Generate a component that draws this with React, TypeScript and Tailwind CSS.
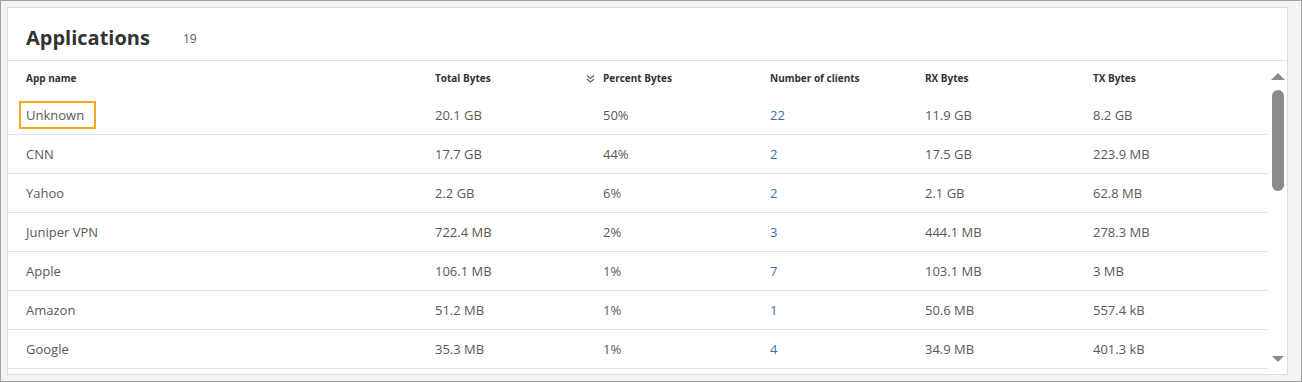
import React from "react";

const rows = [
  ["Unknown", "20.1 GB", "50%", "22", "11.9 GB", "8.2 GB"],
  ["CNN", "17.7 GB", "44%", "2", "17.5 GB", "223.9 MB"],
  ["Yahoo", "2.2 GB", "6%", "2", "2.1 GB", "62.8 MB"],
  ["Juniper VPN", "722.4 MB", "2%", "3", "444.1 MB", "278.3 MB"],
  ["Apple", "106.1 MB", "1%", "7", "103.1 MB", "3 MB"],
  ["Amazon", "51.2 MB", "1%", "1", "50.6 MB", "557.4 kB"],
  ["Google", "35.3 MB", "1%", "4", "34.9 MB", "401.3 kB"],
];

const cols = "grid grid-cols-[409px_168px_167px_155px_168px_1fr]";

export default function App() {
  return (
    <div
      className="w-[1302px] h-[382px] border border-[#a3a3a3] bg-[#f3f3f3] pt-[6px] pl-[6px] pr-[13px] pb-[6px] box-border"
      style={{ fontFamily: '"Open Sans", "Noto Sans", sans-serif' }}
    >
      <div className="h-full bg-white border border-[#dcdcdc] flex flex-col">
        <div className="h-[53px] shrink-0 border-b border-[#e0e0e0] flex items-center pl-[18px] pt-[8px]">
          <span className="text-[20px] font-bold text-[#333] leading-none">Applications</span>
          <span className="ml-[33px] text-[12px] text-[#555] leading-none mt-[2px]">19</span>
        </div>
        <div className="flex flex-1 min-h-0">
          <div className="flex-1 flex flex-col">
            <div className={`${cols} h-[35px] items-center pl-[18px] text-[10px] font-bold text-[#333]`}>
              <div>App name</div>
              <div>Total Bytes</div>
              <div className="relative">
                <svg
                  className="absolute left-[-17px] top-1/2 -translate-y-1/2"
                  width="9"
                  height="9"
                  viewBox="0 0 9 9"
                  fill="none"
                  stroke="#5a6270"
                  strokeWidth="1.2"
                >
                  <path d="M1 1 L4.5 4 L8 1" />
                  <path d="M1 4.5 L4.5 7.5 L8 4.5" />
                </svg>
                Percent Bytes
              </div>
              <div>Number of clients</div>
              <div>RX Bytes</div>
              <div>TX Bytes</div>
            </div>
            {rows.map((r, i) => (
              <div
                key={i}
                className={`${cols} h-[39px] items-center pl-[18px] pt-[1px] border-b border-[#e3e3e3] text-[13px] text-[#595959]`}
              >
                <div className="relative">
                  {i === 0 && (
                    <span className="absolute left-[-7px] top-1/2 -translate-y-1/2 mt-[-1px] w-[77px] h-[28px] border-2 border-[#f5a81c]" />
                  )}
                  {r[0]}
                </div>
                <div>{r[1]}</div>
                <div>{r[2]}</div>
                <div className="text-[#3b6db3]">{r[3]}</div>
                <div>{r[4]}</div>
                <div>{r[5]}</div>
              </div>
            ))}
          </div>
          <div className="w-[19px] shrink-0 flex flex-col items-center pt-[12px]">
            <svg width="14" height="7" viewBox="0 0 14 7">
              <path d="M0 7 L7 0 L14 7 Z" fill="#8a8a8a" />
            </svg>
            <div className="mt-[10px] w-[12px] h-[101px] rounded-full bg-[#8a8a8a]" />
            <div className="flex-1" />
            <svg width="12" height="6" viewBox="0 0 12 6" className="mb-[12px]">
              <path d="M0 0 L12 0 L6 6 Z" fill="#8a8a8a" />
            </svg>
          </div>
        </div>
      </div>
    </div>
  );
}
